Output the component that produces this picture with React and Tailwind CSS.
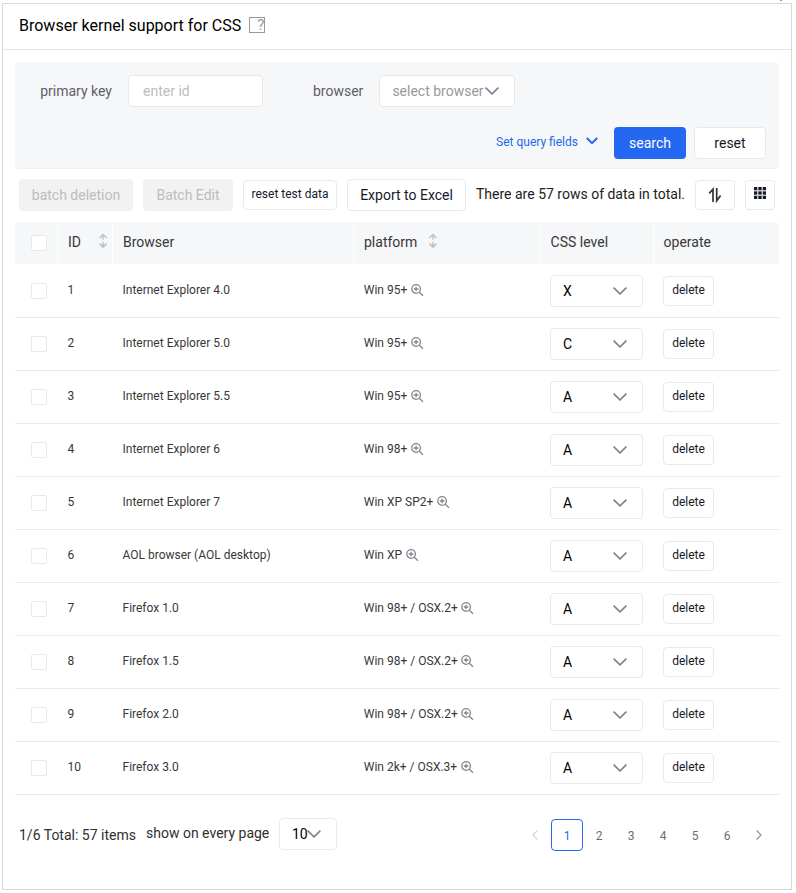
import React from "react";

const rows = [
  [1, "Internet Explorer 4.0", "Win 95+", "X"],
  [2, "Internet Explorer 5.0", "Win 95+", "C"],
  [3, "Internet Explorer 5.5", "Win 95+", "A"],
  [4, "Internet Explorer 6", "Win 98+", "A"],
  [5, "Internet Explorer 7", "Win XP SP2+", "A"],
  [6, "AOL browser (AOL desktop)", "Win XP", "A"],
  [7, "Firefox 1.0", "Win 98+ / OSX.2+", "A"],
  [8, "Firefox 1.5", "Win 98+ / OSX.2+", "A"],
  [9, "Firefox 2.0", "Win 98+ / OSX.2+", "A"],
  [10, "Firefox 3.0", "Win 2k+ / OSX.3+", "A"],
];

const Chevron = () => (
  <svg width="14" height="8" viewBox="0 0 14 8" fill="none" stroke="#84868c" strokeWidth="1.7" className="shrink-0">
    <path d="M0.6 0.6 L7 6.9 L13.4 0.6" />
  </svg>
);

const Checkbox = () => <span className="block size-4 rounded-[2px] border border-[#e8e9eb] bg-white" />;

const Sort = () => (
  <svg width="10" height="16" viewBox="0 0 10 16" fill="none" stroke="#c0c1c4" strokeWidth="1.5">
    <path d="M5 1.6 V6.5 M1.4 5 L5 1.5 L8.6 5 M5 9 V14 M1.4 10.6 L5 14.1 L8.6 10.6" />
  </svg>
);

const Zoom = () => (
  <svg width="13" height="13" viewBox="0 0 13 13" fill="none" stroke="#84868c" strokeWidth="1.3">
    <circle cx="5.1" cy="5" r="4.3" />
    <path d="M8.3 8.2 L12 11.7 M2.8 5 H7.4 M5.1 2.7 V7.3" />
  </svg>
);

const box = "rounded border border-[#e8e9eb] bg-white";
const columns = "grid grid-cols-[43px_55px_241px_187px_113px_125px]";

function Header() {
  const cell = "flex items-center border-r border-white pl-[10px] pb-0.5";
  return (
    <div className={columns + " mb-px h-[42px] overflow-hidden rounded-t bg-[#f6f7f9] text-[#383838]"}>
      <div className="flex items-center border-r border-white pl-4"><Checkbox /></div>
      <div className={cell}>ID<span className="ml-[17px] -mt-0.5"><Sort /></span></div>
      <div className={cell}>Browser</div>
      <div className={cell}>platform<span className="ml-[11px] -mt-0.5"><Sort /></span></div>
      <div className="flex items-center border-r border-white pb-0.5 pl-[9.6px]">CSS level</div>
      <div className="flex items-center pb-0.5 pl-[9.6px]">operate</div>
    </div>
  );
}

function Row({ row }) {
  const [id, name, platform, level] = row;
  return (
    <div className={columns + " h-[53px] items-center border-b border-[#e8e9eb] text-xs text-[#383838]"}>
      <div className="pl-4"><Checkbox /></div>
      <div className="pb-0.5 pl-[9.5px]">{id}</div>
      <div className="pb-0.5 pl-[9.5px]">{name}</div>
      <div className="flex items-center gap-[3.5px] pb-0.5 pl-[9.8px]">{platform}<Zoom /></div>
      <div className="pl-[9px]">
        <div className={box + " flex h-8 w-[93px] items-center justify-between pl-3 pr-[15px] text-sm text-black"}>
          {level}<Chevron />
        </div>
      </div>
      <div className="pl-[9px]">
        <button className={box + " h-[30px] w-[51px] pb-0.5 text-xs text-[#141a2a]"}>delete</button>
      </div>
    </div>
  );
}

export default function App() {
  return (
    <div className="relative h-[893px] w-[796px] overflow-hidden bg-white pl-0.5 pt-[3px] font-[Roboto,sans-serif] text-sm whitespace-nowrap">
      <span className="absolute left-[780px] top-0 h-px w-0.5 bg-[#4db2ff]" />
      <div className="h-[887px] w-[790px] border border-[#d9d9db]">
        <div className="flex h-[46px] items-center border-b border-[#e4e5e7] pl-4 text-base text-black">
          <span className="pb-0.5">Browser kernel support for CSS</span>
          <span className="-mt-[3px] ml-2 flex h-4 w-4 items-center justify-end border border-[#999] pt-px text-[15px] leading-none text-[#999]">?</span>
        </div>
        <div className="mx-3 mt-3">
          <div className="h-[107px] rounded border-b border-[#f0f1f3] bg-[#f6f7f9] pt-[13px] text-[#5e5e66]">
            <div className="flex h-8 items-center">
              <span className="w-[97px] text-right">primary key</span>
              <div className={box + " ml-4 flex h-8 w-[135px] items-center pl-[14px] text-[#bcbcc0]"}>enter id</div>
              <span className="ml-[50px]">browser</span>
              <div className={box + " ml-4 flex h-8 w-[136px] items-center pl-3 text-[#999]"}>select browser<span className="ml-px"><Chevron /></span></div>
            </div>
            <div className="mt-5 flex h-8 items-center justify-end pr-[13px]">
              <span className="pb-[3px] text-xs text-[#2468f2]">Set query fields</span>
              <svg width="12" height="8" viewBox="0 0 12 8" fill="none" stroke="#2468f2" strokeWidth="2" className="-mt-1 ml-2 mr-4">
                <path d="M0.8 1 L6 6.2 L11.2 1" />
              </svg>
              <button className="h-8 w-[72px] rounded bg-[#2468f2] text-white">search</button>
              <button className={box + " ml-2 h-8 w-[72px] text-[#151b26]"}>reset</button>
            </div>
          </div>
          <div className="mt-[10px] flex h-8 items-center pl-1">
            <button className="h-8 w-[114px] rounded bg-[#f2f2f2] text-[#bcbcbe]">batch deletion</button>
            <button className="ml-[10px] h-8 w-[90px] rounded bg-[#f2f2f2] text-[#bcbcbe]">Batch Edit</button>
            <button className={box + " ml-[10px] h-[30px] w-[94px] pb-0.5 text-xs text-[#141a2a]"}>reset test data</button>
            <button className={box + " ml-[10px] h-8 w-[119px] text-[#141a2a]"}>Export to Excel</button>
            <span className="ml-[10px] w-[209px] pb-0.5 text-[#212121]">There are 57 rows of data in total.</span>
            <button className={box + " ml-[10px] flex h-[30px] w-10 items-center justify-center"}>
              <svg width="14" height="16" viewBox="0 0 14 16" fill="none" stroke="#30343d" strokeWidth="1.7">
                <path d="M1.2 6.3 L5 2.2 V15 M8.7 1 V13.8 L12.6 8.6" />
              </svg>
            </button>
            <button className={box + " ml-[10px] flex h-[30px] w-[30px] items-center justify-center pb-1"}>
              <svg width="12" height="12" viewBox="0 0 12 12" fill="#151b26">
                <rect width="12" height="12" opacity="0.12" />
                {[0, 4.4, 8.8].map((y) => [0, 4.4, 8.8].map((x) => <rect key={x + "-" + y} x={x} y={y} width="3.2" height="3.2" />))}
              </svg>
            </button>
          </div>
          <div className="mt-[11px]">
            <Header />
            {rows.map((row) => <Row key={row[0]} row={row} />)}
          </div>
          <div className="mt-[23px] flex h-[33px] items-start pl-1 text-[#303030]">
            <span className="mt-[7px] w-[117px]">1/6 Total: 57 items</span>
            <span className="ml-[10px] mt-[5px] w-[123px]">show on every page</span>
            <div className={box + " ml-[10px] flex h-8 w-[58px] items-center pl-3 text-black"}>10<span className="-ml-px"><Chevron /></span></div>
            <div className="ml-auto mr-1 mt-px flex h-8 items-center text-xs text-[#6b6e75]">
              <span className="flex w-8 justify-center">
                <svg width="6" height="10" viewBox="0 0 6 10" fill="none" stroke="#d4d5d8" strokeWidth="1.2"><path d="M5.4 0.5 L1 5 L5.4 9.5" /></svg>
              </span>
              <span className="flex size-8 items-center justify-center rounded border border-[#2468f2] pt-0.5 text-[#2468f2]">1</span>
              {[2, 3, 4, 5, 6].map((n) => <span key={n} className="w-8 pt-0.5 text-center">{n}</span>)}
              <span className="flex w-8 justify-center">
                <svg width="6" height="10" viewBox="0 0 6 10" fill="none" stroke="#999" strokeWidth="1.3"><path d="M0.6 0.5 L5 5 L0.6 9.5" /></svg>
              </span>
            </div>
          </div>
        </div>
      </div>
    </div>
  );
}
